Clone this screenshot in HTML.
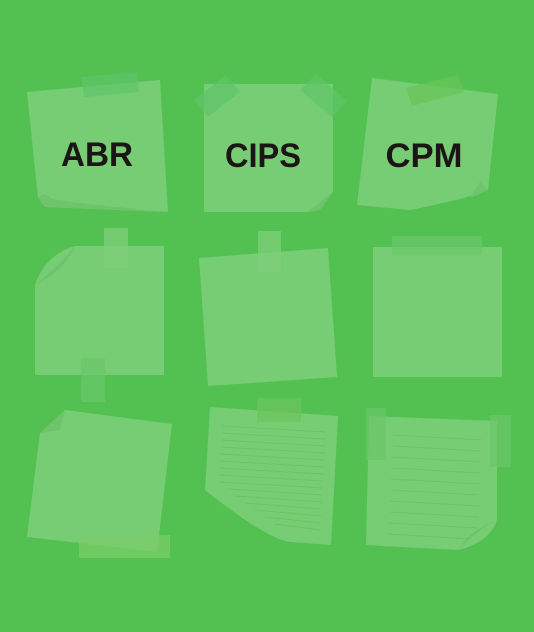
<!DOCTYPE html>
<html><head><meta charset="utf-8"><style>
html,body{margin:0;padding:0;background:#52c152;}
svg{display:block}
text{font-family:"Liberation Sans",sans-serif;font-weight:bold;fill:#1b1515;}
</style></head><body>
<svg width="534" height="632" viewBox="0 0 534 632" xmlns="http://www.w3.org/2000/svg">
<rect width="534" height="632" fill="#52c152"/>
<g fill="#77cd73">
<polygon points="27,92 160,80 168,212 45,207 38,198"/>
<polygon points="204,84 333,84 333,192 308,212 204,212"/>
<path d="M372,78 L498,94 L488,190 Q470,198 410,210 L357,205 Z"/>
<path d="M35,285 Q45,255 75,246 L164,246 L164,375 L35,375 Z"/>
<polygon points="199,258 328,248 337,377 208,386"/>
<rect x="373" y="247" width="129" height="130"/>
<polygon points="65,410 172,424 157,552 27,537 40,433"/>
<path d="M210,407 L338,416 L331,545 L290,542 Q265,538 205,490 Z"/>
<path d="M369,416 L497,421 L497,520 Q490,542 458,550 L366,545 Z"/>
</g>
<g fill="#6fc46b">
<path d="M38,198 Q45,190 50,198 Q60,202 168,212 L45,207 Z"/>
<path d="M308,212 L333,192 L320,210 Z"/>
<path d="M488,190 L470,198 L480,182 Z"/>
<path d="M35,285 Q55,270 75,246 Q65,270 35,285Z"/>
<path d="M40,433 L65,410 L60,430 Z"/>
<path d="M458,550 Q470,530 497,520 Q480,528 458,550Z"/>
</g>
<g stroke="#6bc267" stroke-width="1">
<line x1="222" y1="426" x2="326" y2="432"/><line x1="222" y1="433" x2="326" y2="439"/>
<line x1="221" y1="440" x2="325" y2="446"/><line x1="221" y1="447" x2="325" y2="453"/>
<line x1="220" y1="454" x2="324" y2="460"/><line x1="220" y1="461" x2="324" y2="467"/>
<line x1="220" y1="468" x2="324" y2="474"/><line x1="219" y1="475" x2="323" y2="481"/>
<line x1="220" y1="482" x2="323" y2="488"/><line x1="228" y1="489" x2="322" y2="495"/>
<line x1="235" y1="496" x2="322" y2="502"/><line x1="245" y1="503" x2="321" y2="509"/>
<line x1="255" y1="510" x2="321" y2="516"/><line x1="265" y1="517" x2="320" y2="523"/>
<line x1="275" y1="524" x2="320" y2="530"/>
<line x1="393" y1="435" x2="482" y2="440"/><line x1="393" y1="446" x2="481" y2="451"/>
<line x1="392" y1="457" x2="481" y2="462"/><line x1="392" y1="468" x2="480" y2="473"/>
<line x1="391" y1="479" x2="480" y2="484"/><line x1="391" y1="490" x2="479" y2="495"/>
<line x1="390" y1="501" x2="479" y2="506"/><line x1="390" y1="512" x2="478" y2="517"/>
<line x1="389" y1="523" x2="478" y2="528"/><line x1="389" y1="534" x2="470" y2="539"/>
</g>
<g opacity="0.7">
<polygon points="81,77 137,72 139,92 84,97" fill="#5fc46a"/>
<polygon points="194,100 226,75 240,92 208,117" fill="#5fc46a"/>
<polygon points="300,90 316,74 347,101 332,117" fill="#5fc46a"/>
<polygon points="406,88 458,75 464,92 412,106" fill="#6ac45a"/>
<rect x="104" y="228" width="24" height="40" fill="#80cf7c"/>
<rect x="81" y="358" width="24" height="44" fill="#6bc76a"/>
<rect x="258" y="231" width="23" height="41" fill="#80cf7c"/>
<rect x="392" y="236" width="90" height="19" fill="#6bc66a"/>
<rect x="79" y="535" width="91" height="23" fill="#7ccd6a"/>
<rect x="257" y="398" width="44" height="24" fill="#6dc45c"/>
<rect x="366" y="408" width="20" height="52" fill="#6bc66a"/>
<rect x="490" y="415" width="21" height="52" fill="#6bc66a"/>
</g>
<text x="97" y="166" font-size="34" text-anchor="middle" textLength="72" lengthAdjust="spacingAndGlyphs">ABR</text>
<text x="263" y="167" font-size="34" text-anchor="middle" textLength="76" lengthAdjust="spacingAndGlyphs">CIPS</text>
<text x="424" y="167" font-size="34" text-anchor="middle" textLength="77" lengthAdjust="spacingAndGlyphs">CPM</text>
</svg>
</body></html>
